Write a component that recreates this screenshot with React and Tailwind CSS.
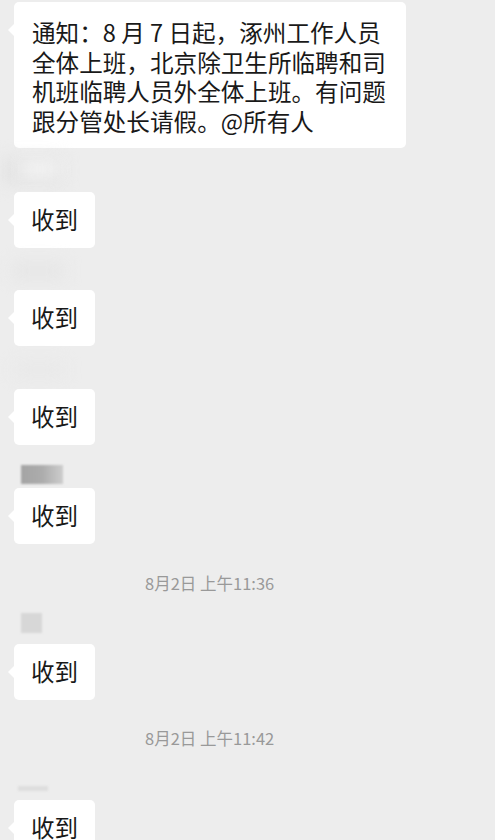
const font = { fontFamily: '"Noto Sans CJK SC", "Noto Sans", sans-serif' };

function Tail() {
  return (
    <span className="absolute left-[-6px] top-[22px] h-0 w-0 border-y-[6px] border-r-[6px] border-y-transparent border-r-white" />
  );
}

function Bubble({ children, className = "" }) {
  return (
    <div className={`relative ml-[14px] shrink-0 self-start rounded-[5px] bg-white text-[#191919] ${className}`}>
      <Tail />
      {children}
    </div>
  );
}

function Ack({ className = "" }) {
  return (
    <Bubble className={`flex h-[56px] w-[81px] items-center justify-center text-[23.5px] ${className}`}>
      收到
    </Bubble>
  );
}

function Time({ text, className = "" }) {
  return (
    <div className={`shrink-0 pl-[145px] text-[16.5px] leading-[22px] text-[#999999] ${className}`}>{text}</div>
  );
}

export default function App() {
  return (
    <div className="flex h-[840px] w-[495px] flex-col overflow-hidden bg-[#ededed]" style={font}>
      {/* 通知 */}
      <Bubble className="mt-[2px] h-[146px] w-[392px] px-[18px] pt-[16px] text-[23.6px] leading-[29.6px]">
        <span className="whitespace-nowrap">
          通知：8 月 7 日起，涿州工作人员
          <br />
          全体上班，北京除卫生所临聘和司
          <br />
          机班临聘人员外全体上班。有问题
          <br />
          跟分管处长请假。@所有人
        </span>
      </Bubble>

      {/* blurred names */}
      <div className="relative mt-[10px] h-[28px] shrink-0">
        <div className="absolute left-[2px] top-0 h-[26px] w-[60px] rounded bg-[#e3e3e3] blur-sm" />
        <div className="absolute left-[20px] top-[4px] h-[14px] w-[40px] bg-[#f6f6f6] blur-sm" />
      </div>
      <Ack className="mt-[6px]" />

      <div className="relative mt-[10px] h-[26px] shrink-0">
        <div className="absolute left-[12px] top-[4px] h-[18px] w-[52px] rounded bg-[#e6e6e6] blur-sm" />
      </div>
      <Ack className="mt-[6px]" />

      <div className="relative mt-[11px] h-[26px] shrink-0">
        <div className="absolute left-[14px] top-[6px] h-[14px] w-[50px] rounded bg-[#e8e8e8] blur-sm" />
      </div>
      <Ack className="mt-[6px]" />

      <div className="mt-[20px] h-[19px] shrink-0 pl-[21px]">
        <div className="h-full w-[42px] bg-gradient-to-r from-[#a4a4a4] via-[#acacac] to-[#cdcdcd] blur-[1px]" />
      </div>
      <Ack className="mt-[4px]" />

      <Time text="8月2日 上午11:36" className="mt-[28px]" />

      <div className="mt-[19px] h-[20px] shrink-0 pl-[21px]">
        <div className="h-full w-[21px] bg-[#d7d7d7] blur-[1px]" />
      </div>
      <Ack className="mt-[11px]" />

      <Time text="8月2日 上午11:42" className="mt-[27px]" />

      <div className="mt-[37px] h-[5px] shrink-0 pl-[18px]">
        <div className="h-full w-[30px] bg-[#dedede] blur-[1px]" />
      </div>
      <Ack className="mt-[9px]" />
    </div>
  );
}
